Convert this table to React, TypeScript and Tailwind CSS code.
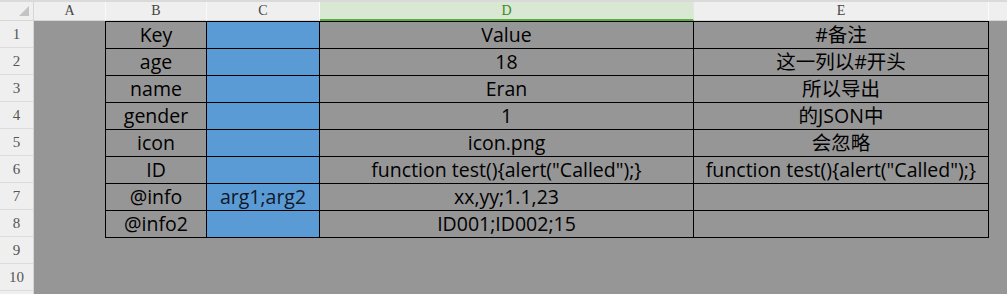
import React from "react";

const rows: [string, string, string, string][] = [
  ["Key", "", "Value", "#备注"],
  ["age", "", "18", "这一列以#开头"],
  ["name", "", "Eran", "所以导出"],
  ["gender", "", "1", "的JSON中"],
  ["icon", "", "icon.png", "会忽略"],
  ["ID", "", 'function test(){alert("Called");}', 'function test(){alert("Called");}'],
  ["@info", "arg1;arg2", "xx,yy;1.1,23", ""],
  ["@info2", "", "ID001;ID002;15", ""],
];

const cols = [
  { name: "A", w: "w-[72px]" },
  { name: "B", w: "w-[101px]" },
  { name: "C", w: "w-[113px]" },
  { name: "D", w: "w-[374px]", active: true },
  { name: "E", w: "w-[295px]" },
];

export default function App() {
  return (
    <div className="h-[294px] w-[1007px] overflow-hidden bg-[#969696] font-['Open_Sans','Noto_Sans_CJK_SC',sans-serif] text-[19.5px] text-black">
      {/* column headers */}
      <div className="flex h-[21px] border-t-2 border-[#dadada] bg-[#efefef] font-['Liberation_Serif',serif] text-[14px] leading-[18px] text-[#444]">
        <div className="relative w-[34px] shrink-0 border-r border-b border-[#d6d6d6]">
          <svg className="absolute right-[4px] top-[4px]" width="10" height="10" viewBox="0 0 10 10">
            <polygon points="10,0 10,10 0,10" fill="#c4c4c4" />
          </svg>
        </div>
        {cols.map((c) =>
          c.active ? (
            <div key={c.name} className={`${c.w} shrink-0 border-r border-b-2 border-r-[#e4e4e4] border-b-[#5faa45] bg-[#d9e8d2] text-center leading-[17px] text-[#3a8a28]`}>
              {c.name}
            </div>
          ) : (
            <div key={c.name} className={`${c.w} shrink-0 border-r border-b border-r-[#fafafa] border-b-[#d6d6d6] text-center`}>
              {c.name}
            </div>
          )
        )}
        <div className="flex-1 border-b border-[#d6d6d6]" />
      </div>

      <div className="flex">
        {/* row headers */}
        <div className="w-[34px] shrink-0 border-r border-[#d6d6d6] bg-[#efefef] font-['Liberation_Serif',serif] text-[15px] text-[#555]">
          {Array.from({ length: 11 }, (_, i) => (
            <div key={i} className="flex h-[27px] items-center justify-center border-b border-[#dcdcdc]">
              {i < 10 ? i + 1 : ""}
            </div>
          ))}
        </div>

        {/* sheet */}
        <div className="flex-1 pl-[71px]">
          <div className="grid w-fit grid-cols-[100px_112px_373px_294px] gap-px border border-black bg-black">
            {rows.map((r, i) => (
              <React.Fragment key={i}>
                <div className="flex h-[26px] items-center justify-center bg-[#969696] whitespace-nowrap">{r[0]}</div>
                <div className="flex h-[26px] items-center justify-center bg-[#5b9bd5] whitespace-nowrap text-[#101828]">{r[1]}</div>
                <div className="flex h-[26px] items-center justify-center bg-[#969696] whitespace-nowrap">{r[2]}</div>
                <div className="flex h-[26px] items-center justify-center bg-[#969696] whitespace-nowrap font-normal">{r[3]}</div>
              </React.Fragment>
            ))}
          </div>
        </div>
      </div>
    </div>
  );
}
